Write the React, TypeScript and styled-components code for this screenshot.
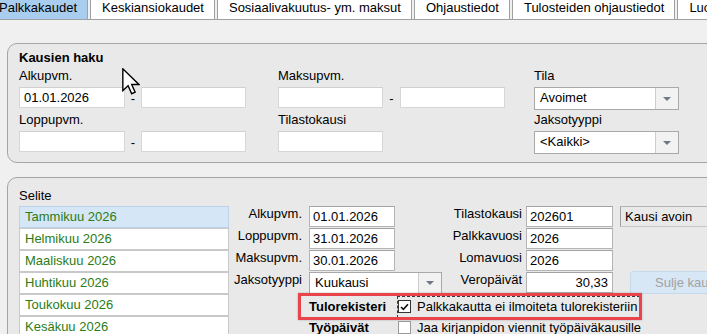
import React from 'react'
import styled, { createGlobalStyle } from 'styled-components'

const GlobalStyle = createGlobalStyle`
  html, body {
    margin: 0;
    padding: 0;
    background: #f0f0f0;
    overflow: hidden;
  }
  body {
    font-family: "Liberation Sans", Arial, sans-serif;
    font-size: 13px;
    color: #000;
  }
`

const Screen = styled.div`
  position: relative;
  width: 707px;
  height: 334px;
  overflow: hidden;
  background: #f0f0f0;
`

const TabStrip = styled.div`
  display: flex;
  width: 740px;
  height: 19px;
  margin-left: -13px;
  border-bottom: 1px solid #a0a0a0;
`

const Tab = styled.div<{ $active?: boolean }>`
  flex: none;
  height: 19px;
  line-height: 15px;
  padding: 0 10px 0 11px;
  margin-right: 2px;
  border-left: 1px solid #a0a0a0;
  border-right: 1px solid #a0a0a0;
  background: ${p => (p.$active ? '#a9cdee' : '#ffffff')};
  white-space: nowrap;
`

const Panel = styled.section`
  box-sizing: border-box;
  width: 760px;
  margin-left: 7px;
  border: 1px solid #a5a5a5;
  border-radius: 10px;
  background: #e9e9e9;
`

const SearchPanel = styled(Panel)`
  margin-top: 23px;
  padding: 6px 0 9px 11px;
`

const PanelTitle = styled.div`
  font-weight: bold;
  line-height: 16px;
  margin-bottom: 2px;
`

const SearchGrid = styled.div`
  display: grid;
  grid-template-columns: 259px 256px 145px;
  row-gap: 3px;
`

const FieldBlock = styled.div`
  display: flex;
  flex-direction: column;
`

const Caption = styled.div<{ $gap?: number }>`
  line-height: 16px;
  margin-bottom: ${p => p.$gap ?? 3}px;
  white-space: nowrap;
`

const Range = styled.div`
  display: flex;
`

const Dash = styled.div<{ $w: number }>`
  width: ${p => p.$w}px;
  text-align: center;
  line-height: 21px;
  padding-top: 1px;
`

const TextBox = styled.div<{ $w?: number; $right?: boolean; $pad?: number; $light?: boolean }>`
  box-sizing: border-box;
  width: ${p => (p.$w ? `${p.$w}px` : '100%')};
  height: 21px;
  line-height: 19px;
  padding: 0 ${p => p.$pad ?? 3}px;
  background: #fff;
  border: 1px solid ${p => (p.$light ? '#d7d7d7' : '#b4b4b4')};
  border-top-color: ${p => (p.$light ? '#cfcfcf' : '#a3a3a3')};
  text-align: ${p => (p.$right ? 'right' : 'left')};
  white-space: nowrap;
  overflow: hidden;
`

const SelectBox = styled.div<{ $w: number; $h: number; $overhang?: number }>`
  box-sizing: border-box;
  display: flex;
  width: ${p => p.$w}px;
  height: ${p => p.$h}px;
  margin-bottom: ${p => -(p.$overhang ?? 0)}px;
  background: #fff;
  border: 1px solid #a9a9a9;
`

const SelectValue = styled.div`
  flex: 1;
  padding-left: 5px;
  line-height: 20px;
  white-space: nowrap;
`

const DropButton = styled.div`
  flex: none;
  width: 22px;
  display: flex;
  align-items: center;
  justify-content: center;
  background: #f2f2f2;
  border-left: 1px solid #cdcdcd;

  &::after {
    content: '';
    border-left: 4px solid transparent;
    border-right: 4px solid transparent;
    border-top: 4px solid #6f7788;
  }
`

const ListPanel = styled(Panel)`
  margin-top: 14px;
  height: 200px;
  padding: 10px 0 0 11px;
  display: grid;
  grid-template-columns: 210px 1fr;
  grid-template-rows: auto 1fr;
  column-gap: 4px;
`

const PeriodList = styled.div`
  grid-column: 1;
  grid-row: 2;
  display: flex;
  flex-direction: column;
`

const PeriodRow = styled.div<{ $selected?: boolean }>`
  box-sizing: border-box;
  height: 22px;
  padding-left: 5px;
  line-height: 20px;
  color: #2b7c16;
  background: ${p => (p.$selected ? '#d5e6f6' : '#ffffff')};
  border: 1px solid ${p => (p.$selected ? '#bdd2e6' : '#c9c9c9')};
`

const Form = styled.div`
  grid-column: 2;
  grid-row: 2;
  display: grid;
  grid-template-columns: 76px 133px 84px 87px 1fr;
  grid-template-rows: repeat(4, 22px) 21px 21px;
  align-items: start;
`

const RowLabel = styled.div<{ $gap: number }>`
  line-height: 16px;
  padding-right: ${p => p.$gap}px;
  text-align: right;
  white-space: nowrap;
`

const StatusField = styled.div`
  box-sizing: border-box;
  width: 110px;
  height: 21px;
  margin-left: 7px;
  padding-left: 4px;
  line-height: 19px;
  background: #e9e9e9;
  border: 1px solid #c6c6c6;
  border-left-color: #a0a0a0;
  border-top-color: #b4b4b4;
  white-space: nowrap;
`

const CloseButton = styled.div`
  box-sizing: border-box;
  width: 113px;
  height: 23px;
  margin: -1px 0 0 17px;
  line-height: 21px;
  text-align: center;
  color: #a2a2a2;
  background: #d8e7f5;
  border: 1px solid #c6d9ea;
  border-radius: 3px;
  white-space: nowrap;
`

const CheckRow = styled.div<{ $highlight?: boolean }>`
  position: relative;
  grid-column: 2 / -1;
  display: flex;
  align-items: flex-start;
  padding-top: 5px;
  white-space: nowrap;

  ${p =>
    p.$highlight &&
    `
    &::after {
      content: '';
      position: absolute;
      left: -11px;
      top: -1px;
      width: 344px;
      height: 27px;
      box-sizing: border-box;
      border: 3px solid #e9444b;
      box-shadow: 0 0 2px rgba(0, 0, 0, 0.25);
      pointer-events: none;
    }
  `}
`

const BoldLabel = styled.div`
  width: 89px;
  flex: none;
  font-weight: bold;
  line-height: 16px;
`

const FocusBox = styled.div<{ $focused?: boolean }>`
  display: flex;
  align-items: flex-start;
  margin: -3px 0 -3px -1px;
  padding: 2px 2px 2px 0;
  border: 1px dashed ${p => (p.$focused ? '#3a3a3a' : 'transparent')};
`

const CheckBox = styled.div<{ $checked?: boolean }>`
  box-sizing: border-box;
  flex: none;
  width: 13px;
  height: 13px;
  margin-top: 1px;
  display: flex;
  align-items: center;
  justify-content: center;
  background: #fff;
  border: 1px solid ${p => (p.$checked ? '#333333' : '#9a9a9a')};
`

const CheckText = styled.div`
  margin-left: 6px;
  line-height: 16px;
`

const Cursor = styled.svg`
  position: absolute;
  left: 122px;
  top: 68px;
`

const tabs = [
  'Palkkakaudet',
  'Keskiansiokaudet',
  'Sosiaalivakuutus- ym. maksut',
  'Ohjaustiedot',
  'Tulosteiden ohjaustiedot',
  'Luokitukset',
]

const periods = [
  'Tammikuu 2026',
  'Helmikuu 2026',
  'Maaliskuu 2026',
  'Huhtikuu 2026',
  'Toukokuu 2026',
  'Kesäkuu 2026',
]

function Select({ value, w, h, overhang }: { value: string; w: number; h: number; overhang?: number }) {
  return (
    <SelectBox $w={w} $h={h} $overhang={overhang}>
      <SelectValue>{value}</SelectValue>
      <DropButton />
    </SelectBox>
  )
}

function Check({ checked }: { checked?: boolean }) {
  return (
    <CheckBox $checked={checked}>
      {checked && (
        <svg width="9" height="8" viewBox="0 0 9 8">
          <path d="M1 4 L3.4 6.4 L8 1.2" fill="none" stroke="#111" strokeWidth="1.6" />
        </svg>
      )}
    </CheckBox>
  )
}

export default function App() {
  return (
    <Screen>
      <GlobalStyle />
      <TabStrip>
        {tabs.map((t, i) => (
          <Tab key={t} $active={i === 0}>
            {t}
          </Tab>
        ))}
      </TabStrip>

      <SearchPanel>
        <PanelTitle>Kausien haku</PanelTitle>
        <SearchGrid>
          <FieldBlock>
            <Caption>Alkupvm.</Caption>
            <Range>
              <TextBox $w={106} $pad={4} $light>01.01.2026</TextBox>
              <Dash $w={16}>-</Dash>
              <TextBox $w={105} $light />
            </Range>
          </FieldBlock>
          <FieldBlock>
            <Caption>Maksupvm.</Caption>
            <Range>
              <TextBox $w={105} $light />
              <Dash $w={17}>-</Dash>
              <TextBox $w={105} $light />
            </Range>
          </FieldBlock>
          <FieldBlock>
            <Caption>Tila</Caption>
            <Select value="Avoimet" w={145} h={23} overhang={2} />
          </FieldBlock>

          <FieldBlock>
            <Caption>Loppupvm.</Caption>
            <Range>
              <TextBox $w={106} $light />
              <Dash $w={16}>-</Dash>
              <TextBox $w={105} $light />
            </Range>
          </FieldBlock>
          <FieldBlock>
            <Caption>Tilastokausi</Caption>
            <TextBox $w={105} $light />
          </FieldBlock>
          <FieldBlock>
            <Caption>Jaksotyyppi</Caption>
            <Select value="<Kaikki>" w={145} h={23} overhang={2} />
          </FieldBlock>
        </SearchGrid>
      </SearchPanel>

      <ListPanel>
        <Caption $gap={2}>Selite</Caption>
        <PeriodList>
          {periods.map((p, i) => (
            <PeriodRow key={p} $selected={i === 0}>
              {p}
            </PeriodRow>
          ))}
        </PeriodList>

        <Form>
          <RowLabel $gap={7}>Alkupvm.</RowLabel>
          <TextBox $w={86}>01.01.2026</TextBox>
          <RowLabel $gap={4}>Tilastokausi</RowLabel>
          <TextBox>202601</TextBox>
          <StatusField>Kausi avoin</StatusField>

          <RowLabel $gap={7}>Loppupvm.</RowLabel>
          <TextBox $w={86}>31.01.2026</TextBox>
          <RowLabel $gap={4}>Palkkavuosi</RowLabel>
          <TextBox>2026</TextBox>
          <div />

          <RowLabel $gap={7}>Maksupvm.</RowLabel>
          <TextBox $w={86}>30.01.2026</TextBox>
          <RowLabel $gap={4}>Lomavuosi</RowLabel>
          <TextBox>2026</TextBox>
          <div />

          <RowLabel $gap={7}>Jaksotyyppi</RowLabel>
          <Select value="Kuukausi" w={133} h={22} />
          <RowLabel $gap={4}>Veropäivät</RowLabel>
          <TextBox $right $pad={4}>30,33</TextBox>
          <CloseButton>Sulje kausi</CloseButton>

          <CheckRow $highlight>
            <BoldLabel>Tulorekisteri</BoldLabel>
            <FocusBox $focused>
              <Check checked />
              <CheckText>Palkkakautta ei ilmoiteta tulorekisteriin</CheckText>
            </FocusBox>
          </CheckRow>
          <CheckRow>
            <BoldLabel>Työpäivät</BoldLabel>
            <FocusBox>
              <Check />
              <CheckText>Jaa kirjanpidon viennit työpäiväkausille</CheckText>
            </FocusBox>
          </CheckRow>
        </Form>
      </ListPanel>

      <Cursor width="18" height="27" viewBox="0 0 13 19.5">
        <path
          d="M0.6 0.6 L0.6 16.4 L4.4 12.8 L7 18.6 L9.5 17.5 L7 11.9 L12.2 11.9 Z"
          fill="#fff"
          stroke="#000"
          strokeWidth="1"
          strokeLinejoin="miter"
        />
      </Cursor>
    </Screen>
  )
}
